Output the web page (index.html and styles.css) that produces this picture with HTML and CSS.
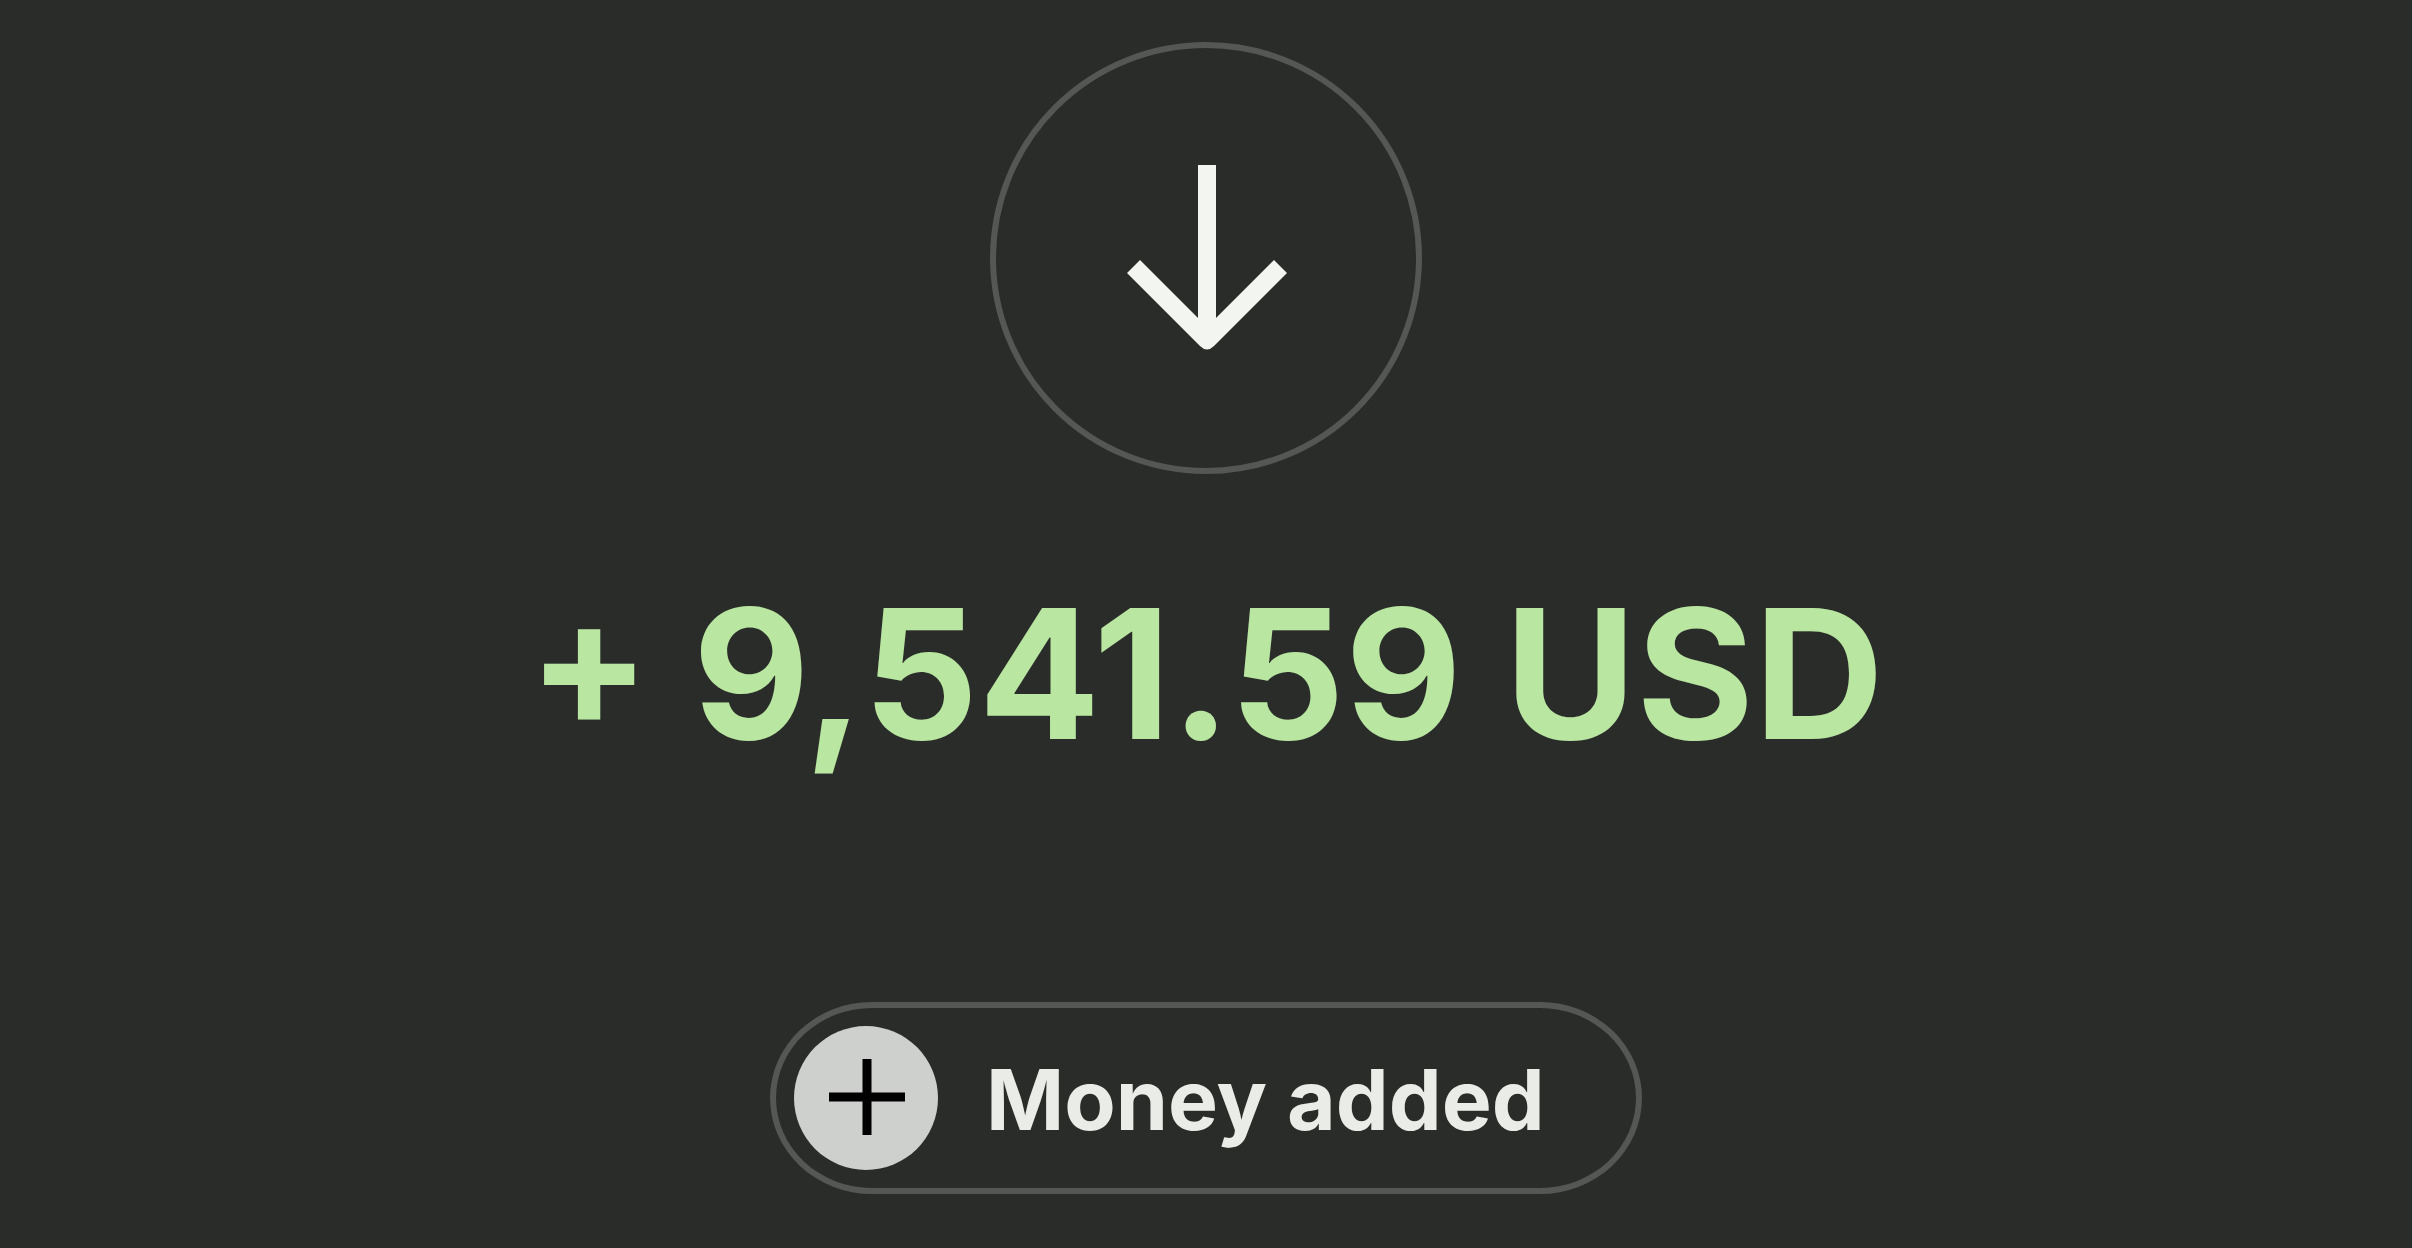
FILE: index.html
```html
<!DOCTYPE html>
<html lang="en">
<head>
<meta charset="utf-8">
<title>Money added</title>
<link rel="stylesheet" href="styles.css">
</head>
<body>
<main class="receipt">
  <div class="direction">
    <svg class="arrow" viewBox="0 0 162 186" aria-hidden="true"><path d="M73 0H91V153L149 95L162 108L89 181Q82 188 75 181L2 108L15 95L73 153Z"/></svg>
  </div>
  <h1 class="amount">+ 9,541.59 USD</h1>
  <button class="status" type="button">
    <svg class="badge" viewBox="0 0 144 144" aria-hidden="true"><circle cx="72" cy="72" r="72"/><path d="M73 33V109M35 71H111"/></svg>
    <span class="label">Money added</span>
  </button>
</main>
</body>
</html>
```
FILE: styles.css
```css
* { box-sizing: border-box; }
body {
  margin: 0;
  min-height: 100vh;
  background: #2a2c29;
  font-family: Inter, "Liberation Sans", sans-serif;
}
.receipt {
  display: flex;
  flex-direction: column;
  align-items: center;
  padding: 42px 24px 54px;
}
.direction {
  display: flex;
  align-items: center;
  justify-content: center;
  width: 432px;
  height: 432px;
  border: 6px solid #555754;
  border-radius: 50%;
}
.arrow { width: 162px; height: 186px; fill: #f3f5f0; }
.amount {
  margin: 88px 0 0;
  color: #b9e6a0;
  font-size: 180px;
  font-weight: 700;
  line-height: 224px;
  text-align: center;
}
.status {
  display: flex;
  align-items: center;
  gap: 48px;
  margin-top: 216px;
  width: 872px;
  max-width: 100%;
  height: 192px;
  padding: 0 18px;
  border: 6px solid #555754;
  border-radius: 102px / 96px;
  background: transparent;
  color: #eaede7;
  font: 700 84px/104px Inter, "Liberation Sans", sans-serif;
}
.badge { width: 144px; height: 144px; }
.badge circle { fill: #ced0cd; }
.badge path { stroke: #000; stroke-width: 9px; }
.label { padding-top: 4px; }
```
